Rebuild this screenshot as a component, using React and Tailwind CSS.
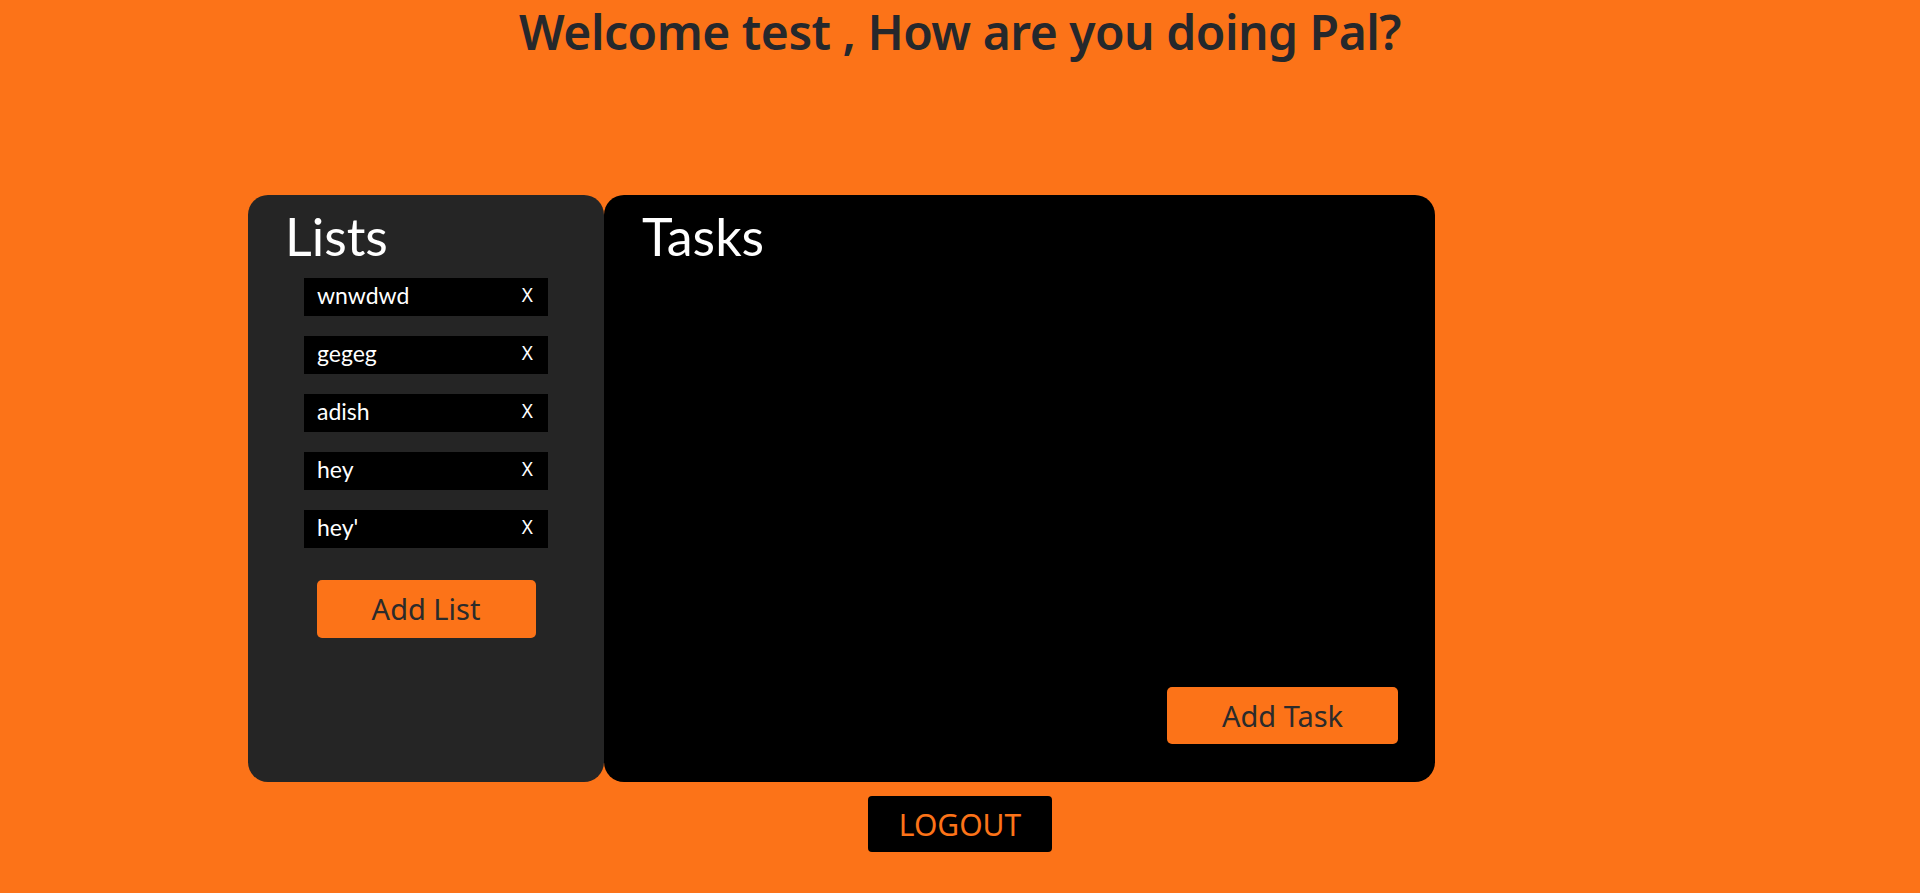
import React, { useState } from "react";

const App = () => {
  const [lists] = useState(["wnwdwd", "gegeg", "adish", "hey", "hey'"]);

  return (
    <div className="min-h-screen w-full bg-[#fc7318] flex flex-col items-center font-['Noto_Sans',sans-serif]">
      {/* header */}
      <h1 className="pt-[8px] text-[48px] leading-none font-semibold text-[#25282c] tracking-[-0.5px]">
        Welcome test , How are you doing Pal?
      </h1>

      {/* panels */}
      <div className="mt-[139px] w-full pl-[248px] flex">
        <div className="w-[356px] h-[587px] bg-[#252525] rounded-[20px] flex flex-col items-center">
          <h2 className="self-start pl-[37px] pt-[15px] text-[52px] leading-none text-white font-['Lato',sans-serif]">
            Lists
          </h2>
          <div className="mt-[16px] flex flex-col gap-[20px]">
            {lists.map((item) => (
              <div
                key={item}
                className="w-[244px] h-[38px] bg-black flex items-center justify-between pl-[13px] pr-[15px] text-white"
              >
                <span className="text-[23px] leading-none pb-[3px] font-['Lato',sans-serif]">{item}</span>
                <button className="text-[19px] leading-none pb-[3px]">X</button>
              </div>
            ))}
          </div>
          <button className="mt-[32px] w-[219px] h-[58px] bg-[#fc7318] rounded-[5px] text-[29px] text-[#2b2b2b]">
            Add List
          </button>
        </div>

        <div className="w-[831px] h-[587px] bg-black rounded-[20px] flex flex-col">
          <h2 className="pl-[38px] pt-[15px] text-[52px] leading-none text-white font-['Lato',sans-serif]">
            Tasks
          </h2>
          <div className="mt-auto flex justify-end pr-[37px] pb-[38px]">
            <button className="w-[231px] h-[57px] bg-[#fc7318] rounded-[5px] text-[29px] text-[#2b2b2b]">
              Add Task
            </button>
          </div>
        </div>
      </div>

      {/* logout */}
      <button className="mt-[14px] w-[184px] h-[56px] bg-black rounded-[4px] text-[30px] text-[#fc7318]">
        LOGOUT
      </button>
    </div>
  );
};

export default App;
